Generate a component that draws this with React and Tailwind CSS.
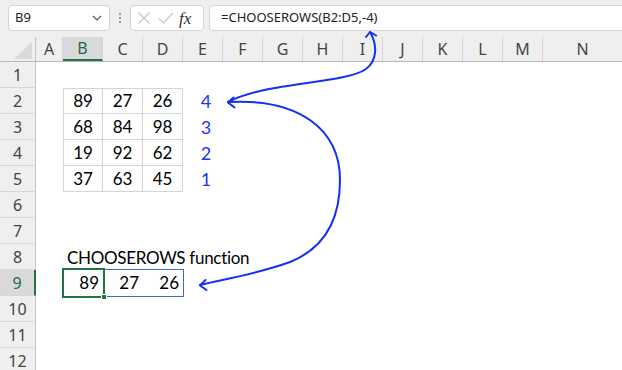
import React from "react";

const cols = [
  { l: "A", w: "w-[27px]" },
  { l: "B", w: "w-[40px]" },
  { l: "C", w: "w-[40px]" },
  { l: "D", w: "w-[40px]" },
  { l: "E", w: "w-[40px]" },
  { l: "F", w: "w-[40px]" },
  { l: "G", w: "w-[40px]" },
  { l: "H", w: "w-[40px]" },
  { l: "I", w: "w-[40px]" },
  { l: "J", w: "w-[40px]" },
  { l: "K", w: "w-[40px]" },
  { l: "L", w: "w-[40px]" },
  { l: "M", w: "w-[40px]" },
  { l: "N", w: "w-[80px]" },
];

const table = [
  [89, 27, 26, 4],
  [68, 84, 98, 3],
  [19, 92, 62, 2],
  [37, 63, 45, 1],
];

const cellFont = { fontFamily: "Lato, 'Open Sans', sans-serif" };

function RowHeader({ n, active }) {
  return (
    <div
      className={
        "w-[36px] h-[26px] shrink-0 flex items-center justify-center text-[16px] border-b border-[#d8d8d8] " +
        (active
          ? "bg-[#d9d9d9] text-[#1e6b41] border-r-2 border-r-[#217346]"
          : "bg-[#efefef] text-[#444] border-r border-r-[#c4c4c4]")
      }
      style={{ fontFamily: "'Noto Sans', sans-serif" }}
    >
      {n}
    </div>
  );
}

export default function App() {
  const rows = [];
  for (let r = 1; r <= 12; r++) {
    let content = null;
    if (r >= 2 && r <= 5) {
      const d = table[r - 2];
      content = (
        <>
          <div className="w-[27px]" />
          {d.slice(0, 3).map((v, i) => (
            <div
              key={i}
              className={
                "w-[40px] h-[26px] flex items-center justify-center text-[17px] text-black border-r border-b border-[#d4d4d4] " +
                (i === 0 ? "border-l " : "") +
                (r === 2 ? "border-t " : "")
              }
              style={cellFont}
            >
              {v}
            </div>
          ))}
          <div
            className="w-[40px] h-[26px] flex items-center justify-center pl-[6px] text-[18px] text-[#1a35f0]"
            style={cellFont}
          >
            {d[3]}
          </div>
        </>
      );
    } else if (r === 8) {
      content = (
        <>
          <div className="w-[27px]" />
          <div
            className="w-[40px] h-[26px] flex items-center pl-[4px] pt-[2px] text-[17px] tracking-[-0.3px] text-black whitespace-nowrap overflow-visible"
            style={cellFont}
          >
            CHOOSEROWS function
          </div>
        </>
      );
    } else if (r === 9) {
      content = (
        <>
          <div className="w-[27px]" />
          <div className="relative flex w-[120px] h-[26px]">
            {[89, 27, 26].map((v, i) => (
              <div
                key={i}
                className="w-[40px] h-[26px] flex items-center justify-end pr-[4px] text-[17px] text-black"
                style={cellFont}
              >
                {v}
              </div>
            ))}
            <div className="absolute left-[-1px] top-[-1px] w-[122px] h-[28px] border border-[#3b6dc4] pointer-events-none" />
            <div className="absolute left-[-1px] top-[-2px] w-[43px] h-[30px] border-2 border-[#217346] pointer-events-none" />
            <div className="absolute left-[38px] top-[24px] w-[6px] h-[6px] bg-[#217346] border border-white pointer-events-none" />
          </div>
        </>
      );
    }
    rows.push(
      <div key={r} className="flex h-[26px]">
        <RowHeader n={r} active={r === 9} />
        {content}
      </div>
    );
  }

  return (
    <div className="relative w-[622px] h-[370px] overflow-hidden bg-white">
      {/* Toolbar */}
      <div
        className="h-[37px] bg-[#efefef] flex items-start pt-[5px]"
        style={{ fontFamily: "'Noto Sans', sans-serif" }}
      >
        <div className="ml-[8px] w-[102px] h-[26px] rounded-[4px] border border-[#d5d5d5] bg-white flex items-center justify-between pl-[6px] pr-[7px]">
          <span className="text-[13px] text-[#222]">B9</span>
          <svg width="10" height="6" viewBox="0 0 10 6">
            <path d="M1 1 L5 5 L9 1" fill="none" stroke="#555" strokeWidth="1.2" />
          </svg>
        </div>
        <div className="w-[20px] h-[26px] flex flex-col items-center justify-center gap-[2px]">
          <div className="w-[2px] h-[2px] bg-[#9a9a9a]" />
          <div className="w-[2px] h-[2px] bg-[#9a9a9a]" />
          <div className="w-[2px] h-[2px] bg-[#9a9a9a]" />
        </div>
        <div className="w-[74px] h-[26px] rounded-[4px] border border-[#d5d5d5] bg-white flex items-center pl-[6px]">
          <svg width="14" height="14" viewBox="0 0 14 14">
            <path d="M1.5 1.5 L12.5 12.5 M12.5 1.5 L1.5 12.5" stroke="#c4c4c4" strokeWidth="1.1" fill="none" />
          </svg>
          <svg width="16" height="14" viewBox="0 0 16 14" className="ml-[7px]">
            <path d="M1 7.5 L5.5 12 L15 2" stroke="#c4c4c4" strokeWidth="1.1" fill="none" />
          </svg>
          <span
            className="ml-[5px] text-[17px] italic text-[#333] leading-none"
            style={{ fontFamily: "'Liberation Serif', serif" }}
          >
            fx
          </span>
        </div>
        <div className="ml-[5px] flex-1 h-[26px] rounded-l-[4px] border border-r-0 border-[#d5d5d5] bg-white flex items-center pl-[11px]">
          <span className="text-[13px] text-[#222] whitespace-nowrap">=CHOOSEROWS(B2:D5,-4)</span>
        </div>
      </div>

      {/* Column headers */}
      <div
        className="flex h-[25px] bg-[#efefef] border-b border-[#b8b8b8]"
        style={{ fontFamily: "'Noto Sans', sans-serif" }}
      >
        <div className="w-[36px] shrink-0 border-r border-[#c4c4c4] flex items-end justify-end pr-[3px] pb-[2px]">
          <svg width="18" height="17" viewBox="0 0 18 17">
            <path d="M0 17 L18 17 L18 0 Z" fill="#d9d9d9" />
          </svg>
        </div>
        {cols.map((c) => (
          <div
            key={c.l}
            className={
              c.w +
              " shrink-0 flex items-center justify-center text-[16px] border-r border-[#d5d5d5] " +
              (c.l === "B"
                ? "bg-[#d9d9d9] text-[#1e6b41] border-b-2 border-b-[#217346]"
                : "text-[#444]")
            }
          >
            {c.l}
          </div>
        ))}
      </div>

      {/* Body */}
      <div>{rows}</div>

      {/* Arrows overlay */}
      <svg
        className="absolute left-0 top-0 pointer-events-none"
        width="622"
        height="370"
        viewBox="0 0 622 370"
      >
        <g fill="none" stroke="#1530f2" strokeWidth="2" strokeLinecap="round" strokeLinejoin="round">
          <path d="M370 32 C377 44, 378 60, 366 69 C345 84, 265 82, 228 102" />
          <path d="M366 37 L370 32 L376 35.5" />
          <path d="M228 102 C300 98, 340 130, 340 180 C340 225, 320 250, 290 262 C260 273, 230 278, 200 285" />
          <path d="M233.5 97.5 L228 102.5 L234.5 107.5" />
          <path d="M205.5 280 L200 285.5 L206.5 290" />
        </g>
      </svg>
    </div>
  );
}
